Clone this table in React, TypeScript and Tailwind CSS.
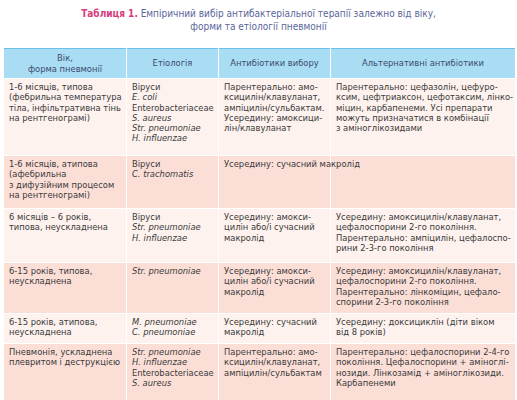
const font = { fontFamily: '"Liberation Sans Narrow", "DejaVu Sans Condensed", "Liberation Sans", sans-serif' };

type Row = { bg: string; h: string; c: React.ReactNode[][] };

const i = (t: string) => <i>{t}</i>;

const rows: Row[] = [
  {
    bg: "bg-[#fdf2ee]",
    h: "h-[77px]",
    c: [
      ["1-6 місяців, типова", "(фебрильна температура", "тіла, інфільтративна тінь", "на рентгенограмі)"],
      ["Віруси", i("E. coli"), "Enterobacteriaceae", i("S. aureus"), i("Str. pneumoniae"), i("H. influenzae")],
      ["Парентерально: амо-", "ксицилін/клавуланат,", "ампіцилін/сульбактам.", "Усередину: амоксици-", "лін/клавуланат"],
      [
        "Парентерально: цефазолін, цефуро-",
        "ксим, цефтриаксон, цефотаксим, лінко-",
        "міцин, карбапенеми. Усі препарати",
        "можуть призначатися в комбінації",
        "з аміноглікозидами",
      ],
    ],
  },
  {
    bg: "bg-[#fbdfd7]",
    h: "h-[53px]",
    c: [
      ["1-6 місяців, атипова", "(афебрильна", "з дифузійним процесом", "на рентгенограмі)"],
      ["Віруси", i("C. trachomatis")],
      ["Усередину: сучасний макролід"],
      [],
    ],
  },
  {
    bg: "bg-[#fdf2ee]",
    h: "h-[54px]",
    c: [
      ["6 місяців – 6 років,", "типова, неускладнена"],
      ["Віруси", i("Str. pneumoniae"), i("H. influenzae")],
      ["Усередину: амокси-", "цилін або/і сучасний", "макролід"],
      [
        "Усередину: амоксицилін/клавуланат,",
        "цефалоспорини 2-го покоління.",
        "Парентерально: ампіцилін, цефалоспо-",
        "рини 2-3-го покоління",
      ],
    ],
  },
  {
    bg: "bg-[#fbdfd7]",
    h: "h-[51px]",
    c: [
      ["6-15 років, типова,", "неускладнена"],
      [i("Str. pneumoniae")],
      ["Усередину: амокси-", "цилін або/і сучасний", "макролід"],
      [
        "Усередину: амоксицилін/клавуланат,",
        "цефалоспорини 2-го покоління.",
        "Парентерально: лінкоміцин, цефало-",
        "спорини 2-3-го покоління",
      ],
    ],
  },
  {
    bg: "bg-[#fdf2ee]",
    h: "h-[30px]",
    c: [
      ["6-15 років, атипова,", "неускладнена"],
      [i("M. pneumoniae"), i("C. pneumoniae")],
      ["Усередину: сучасний", "макролід"],
      ["Усередину: доксициклін (діти віком", "від 8 років)"],
    ],
  },
  {
    bg: "bg-[#fbdfd7]",
    h: "h-[56px]",
    c: [
      ["Пневмонія, ускладнена", "плевритом і деструкцією"],
      [i("Str. pneumoniae"), i("H. influenzae"), "Enterobacteriaceae", i("S. aureus")],
      ["Парентерально: амо-", "ксицилін/клавуланат,", "ампіцилін/сульбактам"],
      [
        "Парентерально: цефалоспорини 2-4-го",
        "покоління. Цефалоспорини + аміноглі-",
        "нозиди. Лінкозамід + аміноглікозиди.",
        "Карбапенеми",
      ],
    ],
  },
];

function Lines({ items }: { items: React.ReactNode[] }) {
  return (
    <>
      {items.map((t, k) => (
        <div key={k} className="whitespace-nowrap">
          {t}
        </div>
      ))}
    </>
  );
}

export default function App() {
  return (
    <div className="h-[400px] w-[517px] overflow-hidden bg-white" style={font}>
      <div className="pt-[7px] text-center text-[10px] leading-[13px] text-[#5a669a]">
        <div>
          <span className="font-bold text-[#d63c7c]">Таблиця 1.</span> Емпіричний вибір антибактеріальної терапії залежно від віку,
        </div>
        <div>форми та етіології пневмонії</div>
      </div>

      <table className="mt-[15px] ml-[3px] w-[512px] table-fixed border-collapse text-[9.3px] leading-[10.3px] text-[#3a3a3a]">
        <colgroup>
          <col className="w-[123px]" />
          <col className="w-[92px]" />
          <col className="w-[112px]" />
          <col className="w-[185px]" />
        </colgroup>
        <thead>
          <tr className="h-[30px] border-t-[1.5px] border-t-[#6cc1e8] bg-[#a9ddf3] text-[#3d4a6e]">
            <th className="border-x border-white px-1 text-center align-middle font-normal">
              Вік,
              <br />
              форма пневмонії
            </th>
            <th className="border-x border-white px-1 text-center align-middle font-normal">Етіологія</th>
            <th className="border-x border-white px-1 text-center align-middle font-normal">Антибіотики вибору</th>
            <th className="border-x border-white px-1 text-center align-middle font-normal">Альтернативні антибіотики</th>
          </tr>
        </thead>
        <tbody>
          {rows.map((r, k) => (
            <tr key={k} className={`${r.bg} ${r.h} border-t border-white`}>
              {r.c.map((cell, j) => (
                <td key={j} className="border-x border-white px-[5px] pt-[3px] align-top">
                  <Lines items={cell} />
                </td>
              ))}
            </tr>
          ))}
        </tbody>
      </table>
    </div>
  );
}
